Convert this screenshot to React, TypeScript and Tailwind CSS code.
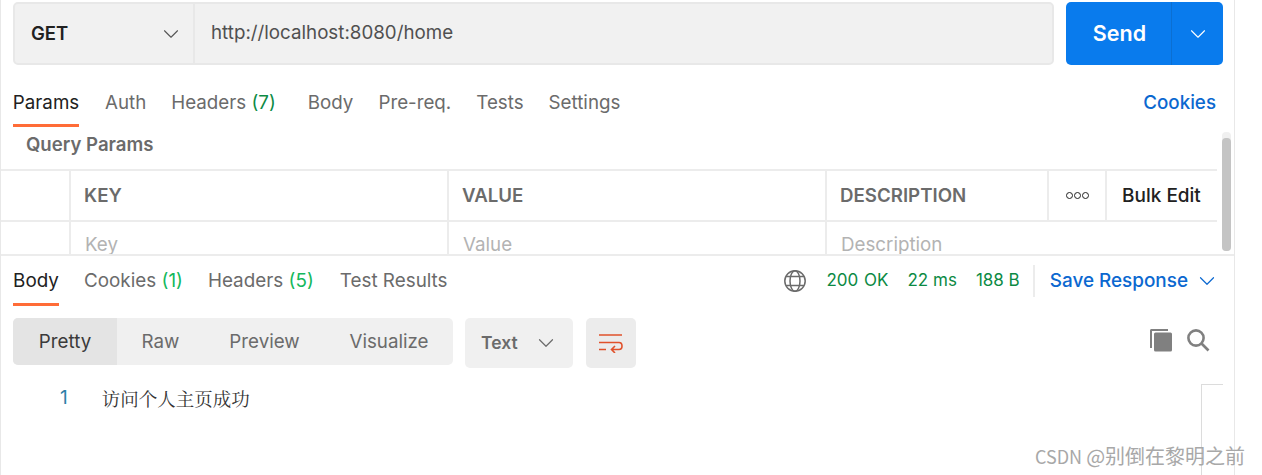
import { ChevronDown } from 'lucide-react'

const requestTabs = [
  { label: 'Auth', ml: 'ml-[26px]' },
  { label: 'Headers', count: '(7)', ml: 'ml-[25px]' },
  { label: 'Body', ml: 'ml-[32px]' },
  { label: 'Pre-req.', ml: 'ml-[25px]' },
  { label: 'Tests', ml: 'ml-[25px]' },
  { label: 'Settings', ml: 'ml-[25px]' },
]

function GlobeIcon() {
  return (
    <svg width="24" height="24" viewBox="0 0 24 24" fill="none" stroke="#6b6b6b" strokeWidth="1.5">
      <circle cx="12" cy="12" r="10.2" />
      <ellipse cx="12" cy="12" rx="5" ry="10.2" />
      <path d="M3 7.5h18M3 16.5h18" />
    </svg>
  )
}

function WrapIcon() {
  return (
    <svg width="24" height="20" viewBox="0 0 24 20" fill="none" stroke="#e0512b" strokeWidth="1.6">
      <path d="M0 2h23M0 9.5h20c4 0 4 7 0 7h-7M0 16.5h7M16 13l-3.5 3.5L16 20" />
    </svg>
  )
}

function CopyIcon() {
  return (
    <svg width="24" height="24" viewBox="0 0 24 24" fill="#808080">
      <path d="M1 2.5C1 1.5 1.7 1 2.5 1H19v2H3v17H1z" />
      <rect x="5" y="4.5" width="18" height="19" rx="1.5" />
    </svg>
  )
}

function SearchIcon() {
  return (
    <svg width="24" height="24" viewBox="0 0 24 24" fill="none" stroke="#808080" strokeWidth="2.6">
      <circle cx="10" cy="10" r="7.6" />
      <path d="M15.5 15.5L22.5 22.5" />
    </svg>
  )
}

export default function App() {
  return (
    <div className="relative h-[475px] w-[1262px] overflow-hidden bg-white font-['Inter','Noto_Sans_CJK_SC',sans-serif]">
      <div className="h-[475px] w-[1235px] border-x border-[#e8e8e8]">
        {/* url bar */}
        <div className="flex h-[65px] pl-[12px] pr-[10px] pt-[2px]">
          <div className="flex h-[63px] w-[1041px] rounded-[5px] border-2 border-[#e8e8e8] bg-[#f1f1f1]">
            <div className="flex w-[180px] items-center justify-between border-r-2 border-[#e8e8e8] pl-[16px] pr-[9px]">
              <span className="text-[18.5px] font-semibold text-[#212121]">GET</span>
              <ChevronDown size={26} strokeWidth={1} className="text-[#555]" />
            </div>
            <div className="flex items-center pl-[16px] text-[18.75px] text-[#505050]">http://localhost:8080/home</div>
          </div>
          <div className="ml-[12px] flex h-[63px] w-[157px] rounded-[5px] bg-[#097bed] text-white">
            <div className="flex w-[106px] items-center justify-center border-r border-[#0b6fd2] pl-[2px] text-[21.5px] font-semibold">Send</div>
            <div className="flex flex-1 items-center justify-center">
              <ChevronDown size={26} strokeWidth={1} />
            </div>
          </div>
        </div>

        {/* request tabs */}
        <div className="flex h-[62px] pl-[12px] pr-[18px] text-[18.75px] text-[#6b6b6b]">
          <div className="flex h-[62px] w-[66px] items-center justify-center border-b-[3px] border-[#ff6c37] pt-[17px] text-[#212121]">Params</div>
          {requestTabs.map((t) => (
            <div key={t.label} className={`flex items-center whitespace-pre pt-[15px] ${t.ml}`}>
              {t.label}
              {t.count && <span className="text-[#0c8a44]"> {t.count}</span>}
            </div>
          ))}
          <div className="ml-auto flex items-center pt-[15px] font-medium text-[#0b68d0]">Cookies</div>
        </div>

        {/* params */}
        <div className="relative h-[127px]">
          <div className="flex h-[42px] items-center pb-[7px] pl-[25px] text-[18.6px] font-semibold text-[#6b6b6b]">Query Params</div>
          <div className="w-[1216px] border-t-2 border-[#ececec]">
            <div className="flex h-[51px] border-b-2 border-[#ececec] text-[18.7px]">
              <div className="w-[70px] border-r-2 border-[#ececec]" />
              <div className="flex w-[378px] items-center border-r-2 border-[#ececec] pl-[13px] pt-[1px] font-semibold text-[#6b6b6b]">KEY</div>
              <div className="flex w-[378px] items-center border-r-2 border-[#ececec] pl-[13px] pt-[1px] font-semibold text-[#6b6b6b]">VALUE</div>
              <div className="flex w-[222px] items-center border-r-2 border-[#ececec] pl-[13px] pt-[1px] font-semibold text-[#6b6b6b]">DESCRIPTION</div>
              <div className="flex w-[58px] items-center justify-center gap-[1px] border-r-2 border-[#ececec]">
                <span className="h-[7px] w-[7px] rounded-full border-[1.5px] border-[#222]" />
                <span className="h-[7px] w-[7px] rounded-full border-[1.5px] border-[#222]" />
                <span className="h-[7px] w-[7px] rounded-full border-[1.5px] border-[#222]" />
              </div>
              <div className="flex flex-1 items-center pl-[15px] pt-[1px] text-[19px] font-medium text-[#212121]">Bulk Edit</div>
            </div>
            <div className="flex h-[32px] overflow-hidden text-[18.75px] text-[#b3b3b3]">
              <div className="h-full w-[70px] border-r-2 border-[#ececec]" />
              <div className="flex h-full w-[378px] items-center border-r-2 border-[#ececec] pl-[14px] pt-[15px]">Key</div>
              <div className="flex h-full w-[378px] items-center border-r-2 border-[#ececec] pl-[14px] pt-[15px]">Value</div>
              <div className="flex h-full items-center pl-[14px] pt-[15px]">Description</div>
            </div>
          </div>
          {/* scrollbar */}
          <div className="absolute right-[3px] top-[5px] h-[119px] w-[9px] rounded-[4px] bg-[#f0f0f0]">
            <div className="mt-[6px] h-[113px] rounded-[4px] bg-[#c4c4c4]" />
          </div>
        </div>

        {/* response header */}
        <div className="flex h-[52px] border-t-2 border-[#ececec] pl-[12px] pr-[17px] text-[18.85px]">
          <div className="flex h-[50px] w-[46px] items-center justify-center border-b-[3px] border-[#ff6c37] pt-[3px] text-[#212121]">Body</div>
          <div className="ml-[25px] flex items-center whitespace-pre text-[#6b6b6b]">
            Cookies <span className="text-[#14b85c]">(1)</span>
          </div>
          <div className="ml-[25px] flex items-center whitespace-pre text-[#6b6b6b]">
            Headers <span className="text-[#14b85c]">(5)</span>
          </div>
          <div className="ml-[26px] flex items-center text-[#6b6b6b]">Test Results</div>
          <div className="ml-auto flex items-center">
            <GlobeIcon />
            <span className="ml-[19px] text-[17px] text-[#0c8a44] [word-spacing:1px]">200 OK</span>
            <span className="ml-[19px] text-[17px] text-[#0c8a44]">22 ms</span>
            <span className="ml-[19px] text-[17px] text-[#0c8a44]">188 B</span>
            <div className="ml-[13px] h-[32px] w-[2px] bg-[#ececec]" />
            <span className="ml-[15px] text-[18.9px] font-medium text-[#0b68d0]">Save Response</span>
            <ChevronDown size={26} strokeWidth={1.1} className="-mr-[3px] ml-[6px] text-[#0b68d0]" />
          </div>
        </div>

        {/* response controls */}
        <div className="box-content flex h-[50px] items-start pl-[12px] pr-[24px] pt-[12px]">
          <div className="flex h-[47px] w-[440px] overflow-hidden rounded-[5px] bg-[#f0f0f0] text-[18.75px] text-[#6b6b6b]">
            <div className="flex w-[104px] items-center justify-center bg-[#e4e4e4] pt-[1px] text-[#3a3a3a]">Pretty</div>
            <div className="flex w-[87px] items-center justify-center pt-[1px]">Raw</div>
            <div className="flex w-[121px] items-center justify-center pt-[1px]">Preview</div>
            <div className="flex flex-1 items-center justify-center pt-[1px]">Visualize</div>
          </div>
          <div className="ml-[12px] flex h-[50px] w-[108px] items-center rounded-[5px] bg-[#f0f0f0] pl-[16px] text-[17.5px] font-semibold text-[#6b6b6b]">
            Text
            <ChevronDown size={26} strokeWidth={1.1} className="ml-[15px]" />
          </div>
          <div className="ml-[13px] flex h-[50px] w-[50px] items-center justify-center rounded-[5px] bg-[#ececec]">
            <WrapIcon />
          </div>
          <div className="ml-auto flex h-[44px] items-center gap-[13px]">
            <CopyIcon />
            <SearchIcon />
          </div>
        </div>

        {/* response body */}
        <div className="flex pl-[59px] pt-[18px]">
          <span className="text-[19px] leading-[24px] text-[#2e7fa8]">1</span>
          <span className="ml-[34px] font-['Noto_Serif_CJK_SC','Liberation_Serif','Noto_Sans_CJK_SC',serif] text-[18.5px] leading-[24px] text-[#333]">访问个人主页成功</span>
        </div>
      </div>

      {/* stray corner line in the editor */}
      <div className="absolute left-[1201px] top-[384px] h-[91px] w-[22px] border-l border-t border-[#dcdcdc]" />
      {/* watermark */}
      <div className="absolute left-[1035px] top-[444px] whitespace-pre font-['Noto_Sans_CJK_SC',sans-serif] text-[18px] leading-[24px] text-[#a8a8a8]">
        CSDN <span className="text-[20px]">@别倒在黎明之前</span>
      </div>
    </div>
  )
}
